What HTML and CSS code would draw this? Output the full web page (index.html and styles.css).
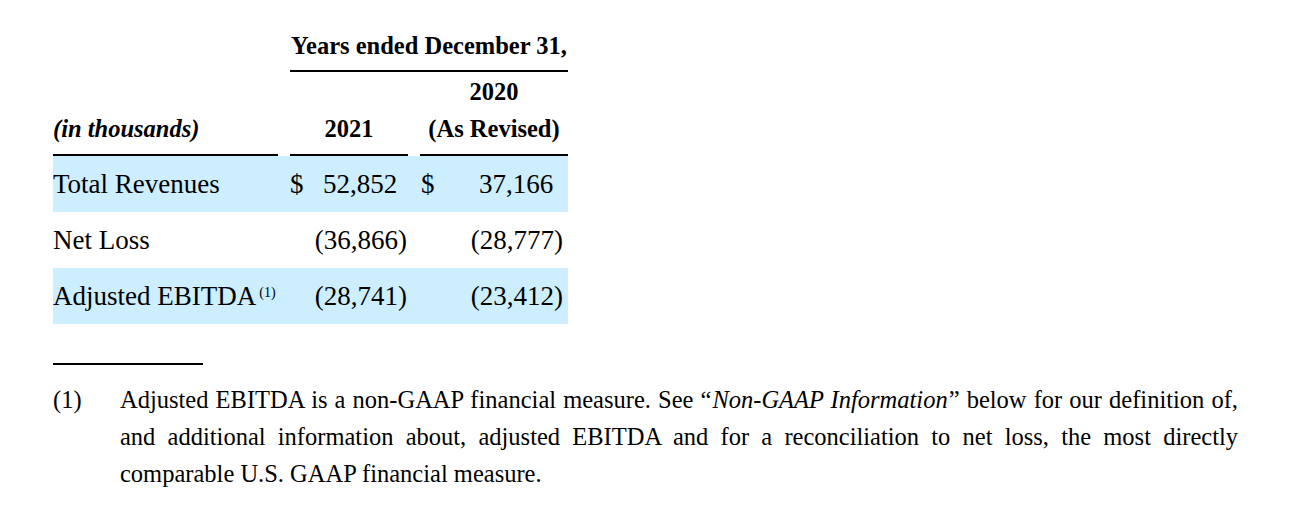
FILE: index.html
```html
<!DOCTYPE html>
<html lang="en">
<head>
<meta charset="utf-8">
<title>Financial summary</title>
<link rel="stylesheet" href="styles.css">
</head>
<body>
<div class="page">
  <div class="fin">
    <div class="h-years"><div class="rule-box">Years ended December 31,</div></div>

    <div class="h-label"><div class="rule-box first"><em>(in thousands)</em></div></div>
    <div class="h-col c2"><div class="rule-box mid">2021</div></div>
    <div class="h-col c3"><div class="rule-box last">2020<br>(As Revised)</div></div>

    <div class="cell label shade">Total Revenues</div>
    <div class="cell val c2 shade"><span class="cur">$</span><span class="num pad">52,852</span></div>
    <div class="cell val c3 shade"><span class="cur">$</span><span class="num pad">37,166</span></div>

    <div class="cell label">Net Loss</div>
    <div class="cell val c2"><span class="num">(36,866)</span></div>
    <div class="cell val c3"><span class="num">(28,777)</span></div>

    <div class="cell label shade">Adjusted EBITDA<sup class="fn">(1)</sup></div>
    <div class="cell val c2 shade"><span class="num">(28,741)</span></div>
    <div class="cell val c3 shade"><span class="num">(23,412)</span></div>
  </div>

  <div class="fn-rule"></div>

  <div class="footnote">
    <div class="fn-mark">(1)</div>
    <p class="fn-text">Adjusted EBITDA is a non-GAAP financial measure. See “<em>Non-GAAP Information</em>” below for our definition of, and additional information about, adjusted EBITDA and for a reconciliation to net loss, the most directly comparable U.S. GAAP financial measure.</p>
  </div>
</div>
</body>
</html>
```

FILE: styles.css
```css
html, body {
  margin: 0;
  padding: 0;
  background: #ffffff;
}

body {
  font-family: "Liberation Serif", "Times New Roman", serif;
  color: #000000;
}

.page {
  padding: 0 0 0 53px;
  width: 1186px;
}

.fin {
  display: grid;
  grid-template-columns: 231px 130px 154px;
  width: 515px;
  font-size: 24.5px;
}

.h-years {
  grid-column: 2 / 4;
  padding-top: 31px;
  font-weight: bold;
  text-align: center;
}

.h-years .rule-box {
  margin-left: 6px;
  line-height: 30px;
  padding-bottom: 9px;
  border-bottom: 2px solid #000;
}

.h-label,
.h-col {
  display: flex;
  flex-direction: column;
  justify-content: flex-end;
  font-weight: bold;
  line-height: 37px;
}

.h-col {
  text-align: center;
}

.rule-box.first,
.rule-box.mid,
.rule-box.last {
  padding-top: 1px;
  padding-bottom: 7px;
  border-bottom: 2px solid #000;
}

.rule-box.first {
  margin-right: 6px;
}

.rule-box.mid {
  margin: 0 6px;
}

.rule-box.last {
  margin-left: 6px;
}

.cell {
  height: 56px;
  display: flex;
  align-items: center;
  font-size: 27px;
}

.shade {
  background: #cceeff;
}

.val {
  justify-content: space-between;
}

.val .num {
  margin-left: auto;
}

.c2.val {
  padding: 0 7px 0 6px;
}

.c3.val {
  padding: 0 5px 0 7px;
}

.num.pad {
  padding-right: 0.36em;
}

.fn {
  font-size: 14px;
  line-height: 0;
  position: relative;
  top: -3px;
  vertical-align: super;
  margin-left: 3px;
}

.fn-rule {
  width: 150px;
  height: 2px;
  background: #000;
  margin-top: 39px;
}

.footnote {
  display: flex;
  margin-top: 16px;
  width: 1185px;
  font-size: 24.5px;
  line-height: 37px;
}

.fn-mark {
  flex: 0 0 67px;
}

.fn-text {
  margin: 0;
  flex: 1 1 auto;
  text-align: justify;
}

.fn-text em {
  padding: 0 1px;
}
```
